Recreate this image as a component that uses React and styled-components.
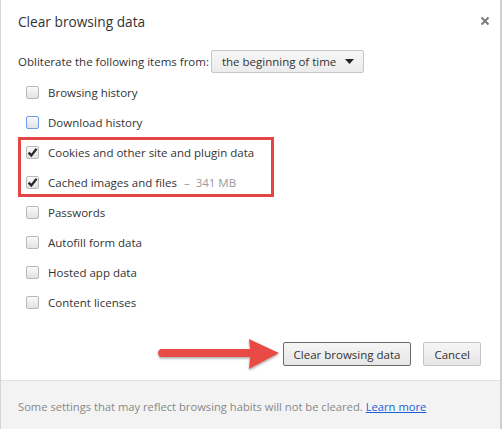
import React from 'react';
import styled, { createGlobalStyle } from 'styled-components';

const Global = createGlobalStyle`
  html, body { margin: 0; padding: 0; background: #fff; }
  body { font-family: "Open Sans", "Noto Sans", sans-serif; }
`;

const Dialog = styled.div`
  position: relative;
  box-sizing: border-box;
  width: 502px;
  height: 429px;
  border-left: 1px solid #d4d4d4;
  border-right: 2px solid #d0d0d0;
  display: flex;
  flex-direction: column;
  color: #333;
  background: #fff;
  white-space: nowrap;
`;

const Body = styled.div`
  flex: 1;
  padding: 12px 0 0 17px;
  display: flex;
  flex-direction: column;
`;

const Title = styled.h1`
  margin: 0;
  font-size: 13.7px;
  font-weight: 400;
  color: #333;
  line-height: 20px;
`;

const Close = styled.div`
  position: absolute;
  top: 9px;
  right: 10px;
  width: 10px;
  height: 10px;
`;

const FromRow = styled.div`
  display: flex;
  align-items: center;
  margin-top: 18px;
  font-size: 11.5px;
  gap: 2px;
`;

const Select = styled.div`
  box-sizing: border-box;
  width: 153px;
  height: 23px;
  border: 1px solid #c6c6c6;
  border-radius: 2px;
  background: linear-gradient(#f6f6f6, #ececec);
  display: flex;
  align-items: center;
  justify-content: space-between;
  padding: 0 9px 0 10px;
  font-size: 11.5px;
  color: #333;
`;

const List = styled.div`
  display: flex;
  flex-direction: column;
  margin-top: 4px;
  padding-left: 8px;
`;

const Highlight = styled.div`
  position: relative;
  display: flex;
  flex-direction: column;
  &::after {
    content: '';
    position: absolute;
    left: -8px;
    top: 0;
    width: 256px;
    height: 60px;
    box-sizing: border-box;
    border: 3px solid #e64545;
  }
`;

const Row = styled.div`
  display: flex;
  align-items: center;
  height: 30px;
  gap: 9px;
  font-size: 11.5px;
  color: #333;
`;

const Box = styled.span`
  box-sizing: border-box;
  width: 13px;
  height: 13px;
  border: 1px solid ${p => (p.$focus ? '#6b9be8' : '#b8b8b8')};
  border-radius: 2px;
  background: linear-gradient(#fafafa, #e2e2e2);
  display: flex;
  align-items: center;
  justify-content: center;
`;

const Size = styled.span`
  color: #999;
  margin-left: 7px;
`;

const Dash = styled.span`
  margin-right: 6px;
`;

const Actions = styled.div`
  display: flex;
  justify-content: flex-end;
  align-items: center;
  gap: 12px;
  padding: 0 19px 14px 0;
`;

const Button = styled.button`
  box-sizing: border-box;
  height: 24px;
  padding: 0 10px;
  font-family: inherit;
  font-size: 11.5px;
  color: #333;
  border-radius: 2px;
  border: 1px solid ${p => (p.$primary ? '#6a6a6a' : '#c3c3c3')};
  background: linear-gradient(#f6f6f6, #e6e6e6);
`;

const Arrow = styled.svg`
  position: absolute;
  left: 149px;
  top: 335px;
`;

const Footer = styled.div`
  height: 49px;
  box-sizing: border-box;
  border-top: 1px solid #e2e2e2;
  background: #f3f3f3;
  display: flex;
  align-items: center;
  padding: 2px 0 0 17px;
  font-size: 11.2px;
  color: #888;
`;

const Link = styled.a`
  color: #1a5fd8;
  text-decoration: underline;
  margin-left: 3px;
`;

const Check = () => (
  <svg width="11" height="11" viewBox="0 0 11 11">
    <path d="M1.6 5.6 L4.3 8.4 L9.6 1.8" fill="none" stroke="#2a2a2a" strokeWidth="2.3" />
  </svg>
);

const Item = ({ label, checked, focus, extra }) => (
  <Row>
    <Box $focus={focus}>{checked && <Check />}</Box>
    <span>
      {label}
      {extra && (
        <Size>
          <Dash>–</Dash>
          {extra}
        </Size>
      )}
    </span>
  </Row>
);

export default function App() {
  return (
    <>
      <Global />
      <Dialog>
        <Close>
          <svg width="10" height="10" viewBox="0 0 10 10">
            <path d="M1.5 1.5 L8.5 8.5 M8.5 1.5 L1.5 8.5" stroke="#7a7a7a" strokeWidth="2" />
          </svg>
        </Close>
        <Body>
          <Title>Clear browsing data</Title>
          <FromRow>
            <span>Obliterate the following items from:</span>
            <Select>
              <span>the beginning of time</span>
              <svg width="9" height="5" viewBox="0 0 9 5">
                <path d="M0 0 L9 0 L4.5 5 Z" fill="#222" />
              </svg>
            </Select>
          </FromRow>
          <List>
            <Item label="Browsing history" />
            <Item label="Download history" focus />
            <Highlight>
              <Item label="Cookies and other site and plugin data" checked />
              <Item label="Cached images and files" checked extra="341 MB" />
            </Highlight>
            <Item label="Passwords" />
            <Item label="Autofill form data" />
            <Item label="Hosted app data" />
            <Item label="Content licenses" />
          </List>
        </Body>
        <Actions>
          <Button $primary>Clear browsing data</Button>
          <Button>Cancel</Button>
        </Actions>
        <Footer>
          Some settings that may reflect browsing habits will not be cleared.
          <Link href="#">Learn more</Link>
        </Footer>
        <Arrow width="134" height="40" viewBox="0 0 134 40">
          <defs>
            <filter id="sh" x="-10%" y="-30%" width="120%" height="160%">
              <feDropShadow dx="0" dy="1.5" stdDeviation="1.3" floodColor="#000" floodOpacity="0.35" />
            </filter>
          </defs>
          <path
            d="M10 14 L100 14 L99 4 L129 18 L99 34 L100 22 L10 22 Q6 18 10 14 Z"
            fill="#e84b45"
            filter="url(#sh)"
          />
        </Arrow>
      </Dialog>
    </>
  );
}
